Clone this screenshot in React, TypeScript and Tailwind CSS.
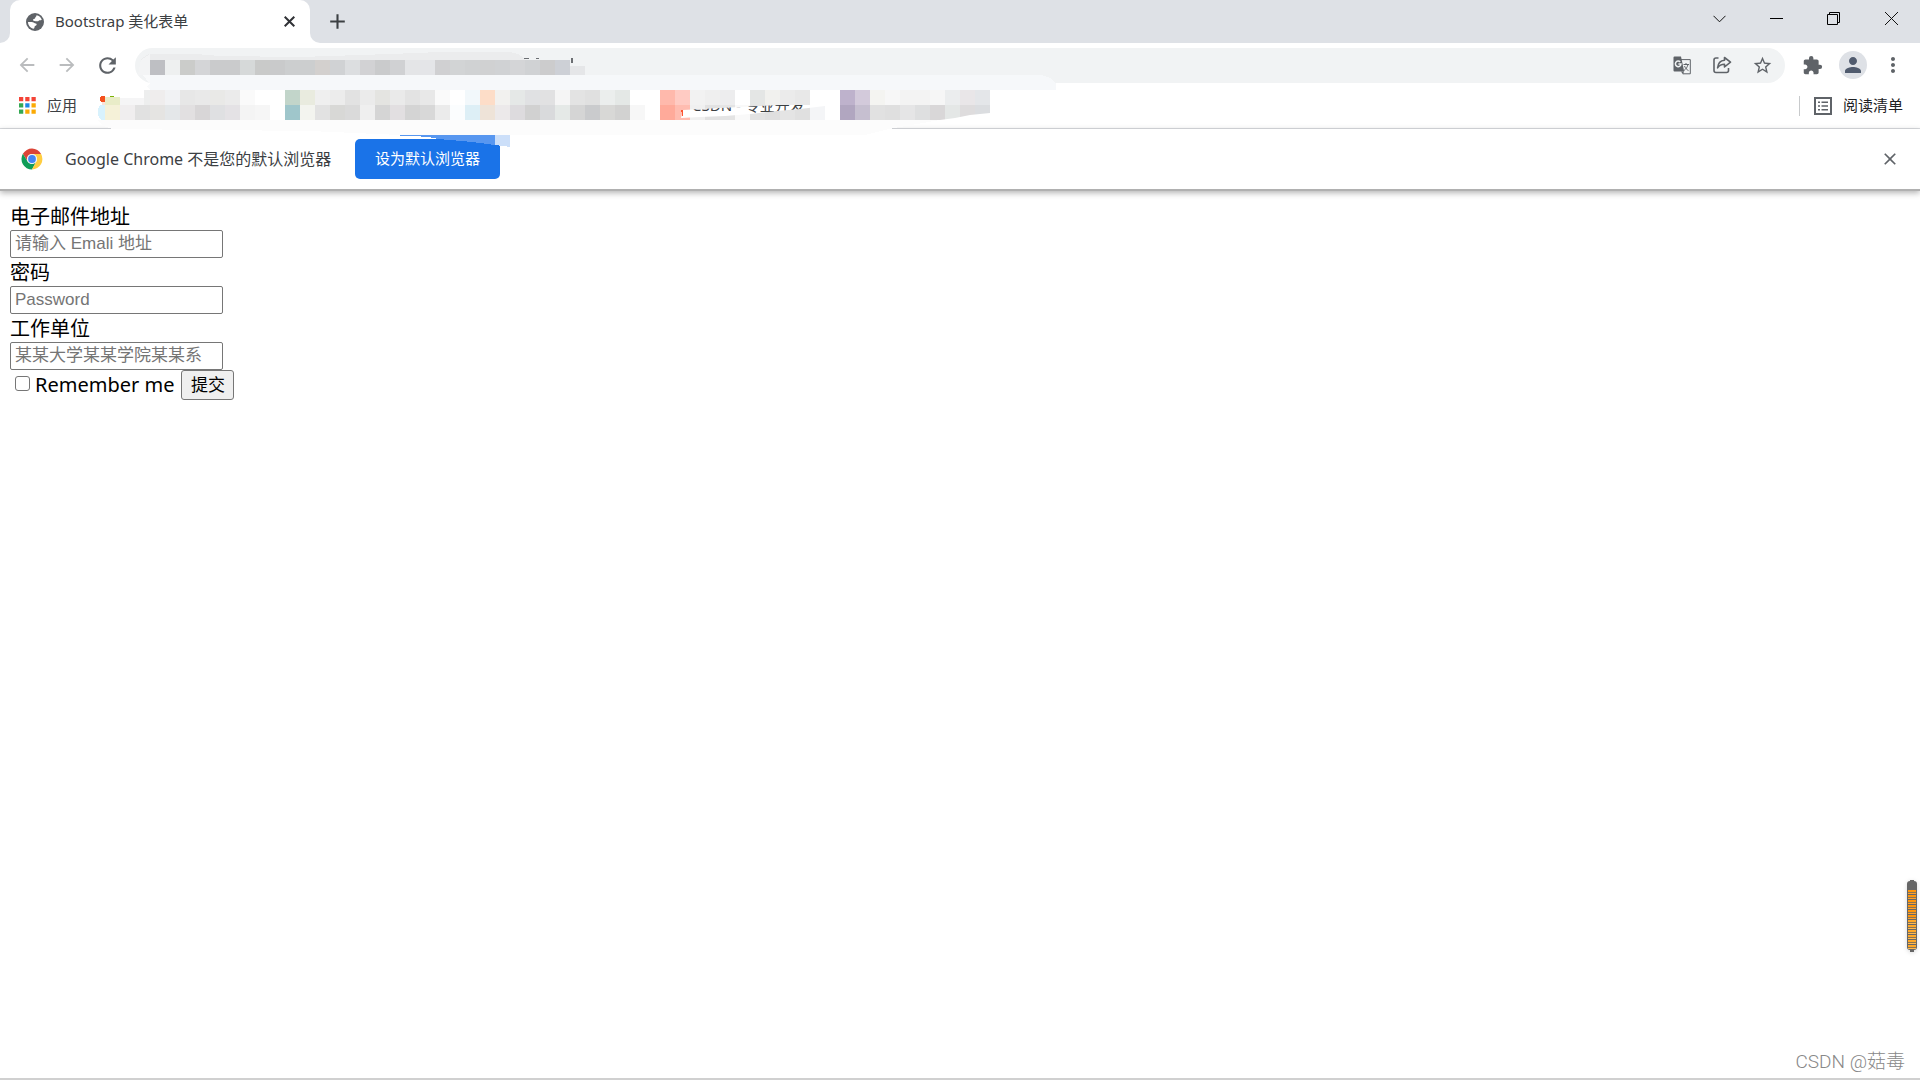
import React from "react";
import {
  MdArrowBack,
  MdArrowForward,
  MdRefresh,
  MdClose,
  MdAdd,
  MdStarBorder,
  MdExtension,
  MdPerson,
  MdMoreVert,
} from "react-icons/md";

const UI = "font-['Noto_Sans','Noto_Sans_CJK_SC',sans-serif]";

const URL_CELLS =
  "bebfc3 eef0f0 cbccca d4d5d7 cacbcc cacbcc d6d9d9 c9cac9 c9cacb cccecf cccecf d3d0ce d0d2d4 dcdee0 d2d2d4 cacbcc d0d1d3 e4e5e7 e4e5e8 d0d0d2 d2d4d5 d0d2d3 d0d1d2 d0d2d4 d4d5d7 d0d2d4 cccccd cdd0d6".split(
    " ",
  );

const TOP_CELLS =
  "efeded f1f2f4 e7e7e7 e9e9e9 e9e9e7 ebebeb fafafa ffffff ffffff c2d5ca e9ebdf efefef ececec e2e2e2 ebebeb e4e4e1 eaeaea e3e3e3 e8e8e8 fafafa ffffff f2f8fb fdddc8 f2f1ef e5e8e7 e0e1e3 e1e1e2 f5f5f5 e3e3e3 e0e0e0 ebeeed e4e8e6 ffffff ffffff ffb9ac ffcbc3 f2f2f2 efefef ededee ffffff e4e6e5 f1f1ee ebebeb e8e8e8 ffffff ffffff beb2cc d3cadb f4f4f1 f7f7f7 f3f3f3 f3f3f3 f6f6f6 ebedee e9e6e8 e4e6e9".split(
    " ",
  );

const BOTTOM_CELLS =
  "f5f1d8 f0eeef e1e1e1 e5e4e2 e4e7e9 e2e0e1 d8d6d7 dfe0e2 e4e2e5 f4f4f4 f6f6f6 ffffff 9fc6cb f3f4ef e2e2e2 d8d8d6 dadada efefef d5d5d5 e2dfe1 d4d4d4 d8d8d8 ebebeb fbfdfe ddeff6 eee3d8 ece9ea dddbde d1d1d1 d9dadc e5e9e7 d5d5d5 cacbcd d8d8d6 d2d2d1 f7f7f7 ffffff ffaa9a ffbcb0 f0f0f0 e2e2e2 e4e4e4 f9f9f9 e2e2e2 dfdfdf e4e4e4 e0e0e0 f4f5f7 ffffff b1a6c0 c6bfd0 e1e1e1 dfdfdf e5e5e6 dedfe0 d9d7d8 e4e7e6 dedcdd dbdde0".split(
    " ",
  );

function cells(colors: string[], x: number, y: number) {
  return colors.map((c, i) => (
    <rect key={i} x={x + i * 15} y={y} width="15" height="15" fill={"#" + c} />
  ));
}

/* Pixelated redaction brushed over the address and the bookmarks. */
function Redaction() {
  return (
    <svg
      className="pointer-events-none absolute left-0 top-0"
      width="1080"
      height="150"
      viewBox="0 0 1080 150"
      shapeRendering="crispEdges"
      aria-hidden="true"
    >
      <defs>
        <clipPath id="bookmarkBrush">
          <path
            clipRule="evenodd"
            d="M98 105H990V113L970 115L955 118L940 120H98ZM683 110L780 105H825V106L800 109L777 111L750 114L725 116L700 117L681 118Z"
          />
        </clipPath>
      </defs>
      <path d="M141 60C145 55 148 54 152 54H196L220 56L300 57L390 54L440 52H510C518 53 522 56 526 60Z" fill="#ebeced" />
      <path d="M141 60L150 54V75L138 75Z" fill="#f3f4f5" />
      {cells(URL_CELLS, 150, 60)}
      <rect x="570" y="66" width="15" height="9" fill="#e5e6e8" />
      <path d="M524 58h5v1h-5zM536 58h3v1h-3zM571 58h2v5h-2z" fill="#6b6e72" />
      <path d="M143 75H150V90H143L150 84Z" fill="#f9fafb" />
      <path d="M150 75H1041L1050 78L1056 84V90H150Z" fill="#f6f8fa" />
      <path d="M135 75L145 85L150 90V97H113L143 97V90Z" fill="#ffffff" />
      <circle cx="103" cy="99" r="3" fill="#f4511e" />
      <path d="M109 97a4 2 0 0 1 6 0z" fill="#7cb305" />
      <rect x="102" y="102" width="4" height="3" fill="#fbe2da" />
      <rect x="105" y="97" width="15" height="8" fill="#e9ecc8" />
      <rect x="120" y="98" width="24" height="7" fill="#f5f5f6" />
      <rect x="144" y="90" width="6" height="15" fill="#edeeee" />
      {cells(TOP_CELLS, 150, 90)}
      <g clipPath="url(#bookmarkBrush)">
        <path d="M100 105H105V120H101L98 115V109Z" fill="#d8f2fd" />
        {cells(BOTTOM_CELLS, 105, 105)}
      </g>
      <path d="M681 110h2v6h-1v-4h-1z" fill="#fc5531" />
      <path d="M98 120H940L889 129L865 135H400L310 131L112 129L103 126Z" fill="#fcfcfc" />
      <path d="M400 135H495V145L480 143L462 141L438 139L428 137L414 136H400Z" fill="#5897f0" />
      <path d="M495 135H510V147L503 146L495 145Z" fill="#ccdff9" />
    </svg>
  );
}

function GlobeIcon() {
  return (
    <svg width="18" height="18" viewBox="0 0 18 18" aria-hidden="true">
      <circle cx="9" cy="9" r="9" fill="#5f6368" />
      <path d="M10.500 2.300C13 2.600 15.200 4.500 15.800 7C14.800 7.400 13.800 6.800 13 7.500C12 8.600 11 8.300 9.500 8.300C8 8.300 6.700 7.800 7 6.600C7.300 5.600 9 6 9.200 4.900C9.300 3.800 10.500 3.800 10.500 2.300Z" fill="#fff" />
      <path d="M2 9C4.500 9 7 9 8 9.700C9 10.500 10.800 10.200 10.700 11.600C10.600 13 8.700 12.600 8.600 13.800C8.500 15 8 15.800 7.200 15.700C4.200 14.900 2 12.200 2 9Z" fill="#fff" />
    </svg>
  );
}

function TranslateIcon() {
  return (
    <svg width="19" height="19" viewBox="0 0 19 19" fill="none" aria-hidden="true">
      <path d="M7 3.6h10.300v14.200H10" stroke="#5f6368" strokeWidth="1" />
      <path d="M1.500 0.500h6.500L11.200 15.500H1.500a1 1 0 0 1-1-1v-13a1 1 0 0 1 1-1z" fill="#5f6368" />
      <path d="M8 15.500h3l-1 3z" fill="#5f6368" />
      <path d="M7.200 5.900A2.800 2.800 0 1 0 8 8H5.400" stroke="#f1f3f4" strokeWidth="1.500" />
      <path d="M10.500 8.500h5.500M13 7v1.500M15 8.500c-.6 2.500-2 4.500-4 6M11.500 10c.8 2 2.200 3.600 4 4.600" stroke="#5f6368" strokeWidth="1" />
    </svg>
  );
}

function ShareIcon() {
  return (
    <svg width="19" height="18" viewBox="0 0 19 18" fill="none" stroke="#5f6368" strokeWidth="1.600" aria-hidden="true">
      <path d="M5.500 2H3A2 2 0 0 0 1 4v10.500a2 2 0 0 0 2 2h10.500a2 2 0 0 0 2-2V12" />
      <path d="M11.500 1.500L17.500 6.200L11.500 11V8.200C8.500 8.200 6.300 9.300 4.600 11.800C5 7.500 7.500 4.500 11.500 4.200Z" strokeLinejoin="round" />
    </svg>
  );
}

function ReadingListIcon() {
  return (
    <svg width="18" height="18" viewBox="0 0 18 18" aria-hidden="true">
      <rect x="1" y="1" width="16" height="16" fill="none" stroke="#5f6368" strokeWidth="2" />
      <path d="M4 4.500h2v1.500h-2zM4 8.250h2v1.500h-2zM4 12h2v1.500h-2zM7.500 4.500h6.500v1.500h-6.500zM7.500 8.250h6.500v1.500h-6.500zM7.500 12h6.500v1.500h-6.500z" fill="#5f6368" />
    </svg>
  );
}

function ChromeLogo() {
  return (
    <svg width="22" height="22" viewBox="0 0 48 48" aria-hidden="true">
      <circle cx="24" cy="24" r="23" fill="#fff" />
      <path d="M24 13H43.900A23 23 0 0 0 4.100 12.500L14.500 29.500A11 11 0 0 1 24 13Z" fill="#db4437" />
      <path d="M14.500 29.500L4.100 12.500A23 23 0 0 0 24 47L33.500 29.500A11 11 0 0 1 14.500 29.500Z" fill="#0f9d58" />
      <path d="M33.500 29.500L24 47A23 23 0 0 0 43.900 13H24A11 11 0 0 1 33.500 29.500Z" fill="#ffcd40" />
      <circle cx="24" cy="24" r="11" fill="#f1f1f1" />
      <circle cx="24" cy="24" r="8.500" fill="#4285f4" />
    </svg>
  );
}

const APP_COLORS = ["#f44336", "#f44336", "#f44336", "#34a853", "#1e88e5", "#fbaa05", "#34a853", "#fbaa05", "#fbaa05"];

function AppsIcon() {
  return (
    <svg width="17" height="17" viewBox="0 0 17 17" aria-hidden="true">
      {APP_COLORS.map((c, i) => (
        <rect key={i} x={(i % 3) * 6.25} y={Math.floor(i / 3) * 6.25} width="4.25" height="4.25" fill={c} />
      ))}
    </svg>
  );
}

function TabStrip() {
  return (
    <div className="flex h-[43px] items-end bg-[#dee1e6]">
      <div className="h-[10px] w-[10px] bg-white">
        <div className="h-full w-full rounded-br-[10px] bg-[#dee1e6]" />
      </div>
      <div className="flex h-[43px] w-[300px] items-center rounded-t-[10px] bg-white pl-4 pr-[10px]">
        <GlobeIcon />
        <span className="ml-[11px] flex-1 text-[15px] text-[#3c4043]">Bootstrap 美化表单</span>
        <button aria-label="关闭标签页" className="flex h-[22px] w-[22px] items-center justify-center">
          <svg width="11" height="11" viewBox="0 0 11 11" stroke="#303236" strokeWidth="2" aria-hidden="true">
            <path d="M0.700 0.700L10.300 10.300M10.300 0.700L0.700 10.300" />
          </svg>
        </button>
      </div>
      <div className="h-[10px] w-[10px] bg-white">
        <div className="h-full w-full rounded-bl-[10px] bg-[#dee1e6]" />
      </div>
      <button aria-label="新标签页" className="flex h-[43px] w-[34px] items-center justify-center">
        <MdAdd size={25} color="#3c4043" />
      </button>
      <div className="ml-auto flex h-[37px] items-center self-start">
        <button aria-label="搜索标签页" className="flex w-[57px] justify-center">
          <svg width="13" height="8" viewBox="0 0 13 8" fill="none" stroke="#111" strokeWidth="1">
            <path d="M0.500 0.800L6.500 6.800L12.500 0.800" />
          </svg>
        </button>
        <button aria-label="最小化" className="flex w-[57px] justify-center">
          <span className="h-px w-[13px] bg-black" />
        </button>
        <button aria-label="还原" className="flex w-[57px] justify-center">
          <svg width="13" height="13" viewBox="0 0 13 13" fill="none" stroke="#000" strokeWidth="1">
            <path d="M0.500 2.500h10v10h-10zM2.500 2.500v-2h10v10h-2" />
          </svg>
        </button>
        <button aria-label="关闭" className="flex w-[58px] justify-center">
          <svg width="13" height="13" viewBox="0 0 13 13" fill="none" stroke="#111" strokeWidth="1">
            <path d="M0 0L13 13M13 0L0 13" />
          </svg>
        </button>
      </div>
    </div>
  );
}

function Toolbar() {
  return (
    <div className="flex h-[45px] items-center bg-white pb-[1px] pl-4 pr-[15px]">
      <button aria-label="后退" className="mr-[18px]">
        <MdArrowBack size={22} color="#babcbe" />
      </button>
      <button aria-label="前进" className="mr-[17px]">
        <MdArrowForward size={22} color="#babcbe" />
      </button>
      <button aria-label="重新加载" className="mr-[15px]">
        <MdRefresh size={25} color="#5f6368" />
      </button>
      <div className="flex h-[35px] flex-1 items-center rounded-full bg-[#f1f3f4] pr-[12px]">
        <input aria-label="地址" className="h-full min-w-0 flex-1 bg-transparent px-5 text-sm outline-none" />
        <button aria-label="翻译" className="mr-[21px]">
          <TranslateIcon />
        </button>
        <button aria-label="分享" className="mr-[20px]">
          <ShareIcon />
        </button>
        <button aria-label="收藏">
          <MdStarBorder size={21} color="#5f6368" />
        </button>
      </div>
      <button aria-label="扩展程序" className="ml-[17px] mr-[16px]">
        <MdExtension size={21} color="#5f6368" />
      </button>
      <button aria-label="个人资料" className="mr-[14px] flex h-[28px] w-[28px] items-center justify-center rounded-full bg-[#dee1e6]">
        <MdPerson size={24} color="#505b6e" />
      </button>
      <button aria-label="更多">
        <MdMoreVert size={24} color="#5f6368" />
      </button>
    </div>
  );
}

function BookmarksBar() {
  return (
    <div className="flex h-[41px] items-center border-b border-[#dadce0] bg-white pb-[5px] pl-[19px] pr-[17px] text-[15px] text-[#3c4043]">
      <a href="#apps" className="flex items-center gap-[11px]">
        <AppsIcon />
        <span>应用</span>
      </a>
      <a href="#csdn" className="ml-[615px] whitespace-nowrap">
        CSDN - 专业开发
      </a>
      <button className="ml-auto flex h-[20px] items-center gap-[11px] border-l border-[#c8cacc] pl-[14px] text-[#202124]">
        <ReadingListIcon />
        <span>阅读清单</span>
      </button>
    </div>
  );
}

function InfoBar() {
  return (
    <div className="flex h-[62px] items-center border-b-2 border-[#b0b0b0] bg-white pb-[1px] pl-[21px] pr-[20px] shadow-[0_2px_6px_rgba(0,0,0,0.3)]">
      <ChromeLogo />
      <span className="ml-[22px] min-w-[274px] text-[16px] text-[#3c4043]">Google Chrome 不是您的默认浏览器</span>
      <button className="ml-4 h-[40px] w-[145px] rounded-[5px] bg-[#1a73e8] text-[15px] text-white">
        设为默认浏览器
      </button>
      <button aria-label="关闭提示" className="ml-auto">
        <MdClose size={20} color="#5f6368" />
      </button>
    </div>
  );
}

const FIELDS = [
  { id: "email", label: "电子邮件地址", type: "email", hint: "请输入 Emali 地址" },
  { id: "password", label: "密码", type: "password", hint: "Password" },
  { id: "workplace", label: "工作单位", type: "text", hint: "某某大学某某学院某某系" },
];

function SignupForm() {
  return (
    <form className="px-[10px] pt-[11px] text-[20px] leading-[30px] text-black" onSubmit={(e) => e.preventDefault()}>
      {FIELDS.map((f) => (
        <div key={f.id} className="flex flex-col items-start">
          <label htmlFor={f.id} className="h-[28px]">
            {f.label}
          </label>
          <input
            id={f.id}
            type={f.type}
            placeholder={f.hint}
            className="h-[28px] w-[213px] rounded-[2px] border border-[#767676] bg-white px-[4px] font-['Liberation_Sans','Noto_Sans_CJK_SC',sans-serif] text-[17px] leading-[24px] placeholder:text-[#757575]"
          />
        </div>
      ))}
      <div className="flex h-[30px] items-center">
        <label className="flex items-center">
          <input
            type="checkbox"
            className="mb-[3px] ml-[5px] mr-[5px] h-[15px] w-[15px] appearance-none rounded-[3px] border border-[#767676] bg-white"
          />
          Remember me
        </label>
        <button
          type="submit"
          className="ml-[7px] h-[30px] w-[53px] rounded-[3px] border border-[#767676] bg-[#efefef] text-[17px] leading-[24px]"
        >
          提交
        </button>
      </div>
    </form>
  );
}

/* Battery-shaped floating handle with orange charge stripes. */
function BatteryHandle() {
  return (
    <svg className="absolute right-[3px] top-[880px] drop-shadow-sm" width="10" height="72" viewBox="0 0 10 72" aria-hidden="true">
      <rect x="3" y="0" width="4" height="3" fill="#666" />
      <rect x="0" y="1" width="10" height="69" rx="3" fill="#666" />
      <rect x="3" y="69" width="4" height="3" fill="#666" />
      {Array.from({ length: 12 }, (_, i) => (
        <g key={i}>
          <rect x="1" y={10 + i * 5} width="8" height="2" fill={i < 6 ? "#ff9409" : "#ffa726"} />
          <rect x="1" y={12 + i * 5} width="8" height="1" fill="#8a7550" />
          <rect x="1" y={13 + i * 5} width="8" height="1" fill={i < 6 ? "#ffa02a" : "#ffb84e"} />
        </g>
      ))}
    </svg>
  );
}

export default function App() {
  return (
    <div className={`relative flex min-h-screen flex-col overflow-hidden border-b-2 border-[#d0d0d0] bg-white ${UI}`}>
      <header className="relative">
        <TabStrip />
        <Toolbar />
        <BookmarksBar />
        <InfoBar />
        <Redaction />
      </header>
      <main>
        <SignupForm />
      </main>
      <BatteryHandle />
      <div className="absolute bottom-0 right-[15px] text-[19px] font-light leading-[32px] text-[#888] font-['Roboto','Noto_Sans_CJK_SC',sans-serif]">
        CSDN @菇毒
      </div>
    </div>
  );
}
